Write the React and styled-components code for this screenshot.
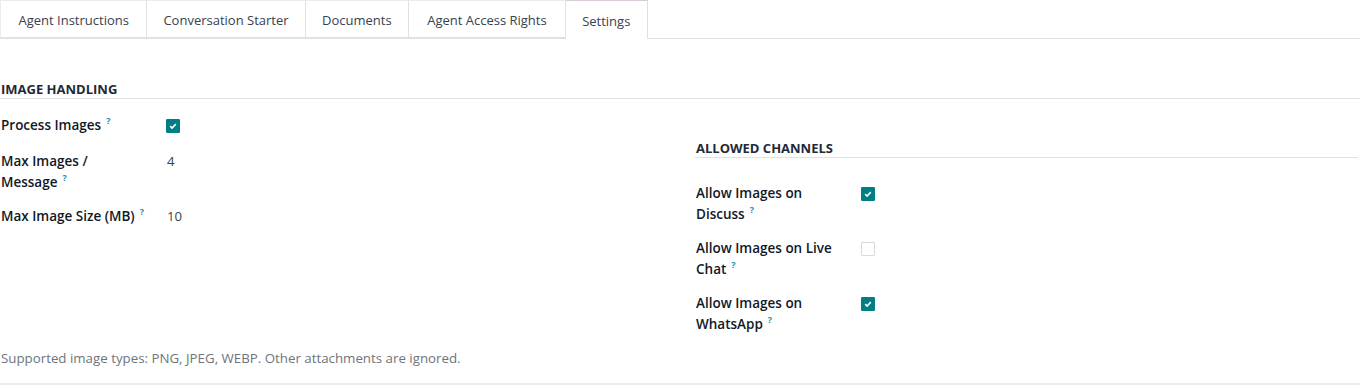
import React from 'react';
import styled, { createGlobalStyle } from 'styled-components';

const teal = '#017e84';
const border = '#dee2e6';

const GlobalStyle = createGlobalStyle`
  body {
    margin: 0;
    background: #fff;
    font-family: "Open Sans", "Noto Sans", sans-serif;
    font-size: 13px;
    color: #212529;
  }
`;

const Page = styled.div`
  width: 1360px;
  height: 385px;
  box-sizing: border-box;
  border-bottom: 2px solid #ececec;
`;

const TabBar = styled.div`
  display: flex;
  height: 38px;
  border-bottom: 1px solid ${border};
  box-sizing: content-box;
`;

const Tab = styled.div`
  display: flex;
  align-items: center;
  padding: 1px ${(p) => p.$pad}px 0;
  margin-bottom: ${(p) => (p.$active ? '-1px' : '0')};
  height: ${(p) => (p.$active ? '39px' : '38px')};
  box-sizing: border-box;
  background: #fff;
  color: #374151;
  border: 1px solid ${border};
  border-top-color: ${(p) => (p.$active ? '#d9c9d9' : '#e9ecef')};
  border-left: none;
  border-bottom: ${(p) => (p.$active ? 'none' : `1px solid ${border}`)};
  &:first-child {
    border-left: 1px solid #e9ecef;
  }
`;

const Content = styled.div`
  padding-top: 41px;
`;

const SectionTitle = styled.div`
  font-weight: 700;
  font-size: 13px;
  text-transform: uppercase;
  color: #1f2937;
  line-height: 18px;
  padding-left: 1px;
  border-bottom: 1px solid ${border};
  margin-bottom: ${(p) => p.$after}px;
`;

const Columns = styled.div`
  display: grid;
  grid-template-columns: 680px 680px;
`;

const Column = styled.div`
  padding-left: ${(p) => p.$indent}px;
  padding-top: ${(p) => p.$top}px;
  padding-right: ${(p) => p.$right || 0}px;
`;

const Row = styled.div`
  display: grid;
  grid-template-columns: 166px 1fr;
  line-height: 21px;
  padding-bottom: ${(p) => p.$pb || 13}px;
`;

const Label = styled.div`
  font-weight: 600;
  font-size: 13.5px;
  color: #111827;
  padding-left: 1px;
  padding-right: 18px;
`;

const LastWord = styled.span`
  white-space: nowrap;
`;

const Help = styled.span`
  display: inline-block;
  vertical-align: top;
  color: #1a8fb0;
  font-size: 9px;
  font-weight: 700;
  line-height: 12px;
  margin-left: 5px;
`;

const Value = styled.div`
  color: #374151;
  font-size: 13.2px;
  padding-left: 1px;
`;

const Check = styled.span`
  display: inline-flex;
  align-items: center;
  justify-content: center;
  width: 14px;
  height: 14px;
  margin-top: 4px;
  box-sizing: border-box;
  border-radius: 1px;
  background: ${(p) => (p.$on ? teal : '#fff')};
  border: 1px solid ${(p) => (p.$on ? teal : '#d8dadd')};
`;

const Note = styled.div`
  color: #6c757d;
  font-size: 13.3px;
  line-height: 21px;
  padding-left: 1px;
`;

function Checkbox({ on }) {
  return (
    <Check $on={on}>
      {on && (
        <svg width="8" height="8" viewBox="0 0 8 8">
          <path d="M1.2 4.2 L3.1 6 L6.8 2.1" fill="none" stroke="#fff" strokeWidth="1.6" />
        </svg>
      )}
    </Check>
  );
}

function Field({ label, children, pb }) {
  const words = label.split(' ');
  const last = words.pop();
  return (
    <Row $pb={pb}>
      <Label>
        {words.length > 0 && words.join(' ') + ' '}
        <LastWord>
          {last}
          <Help>?</Help>
        </LastWord>
      </Label>
      <div>{children}</div>
    </Row>
  );
}

const tabs = [
  ['Agent Instructions', 17.5],
  ['Conversation Starter', 16],
  ['Documents', 16.5],
  ['Agent Access Rights', 18],
  ['Settings', 16.5],
];

export default function App() {
  return (
    <>
      <GlobalStyle />
      <Page>
        <TabBar>
          {tabs.map(([t, pad]) => (
            <Tab key={t} $pad={pad} $active={t === 'Settings'}>
              {t}
            </Tab>
          ))}
        </TabBar>
        <Content>
          <SectionTitle $after={16}>Image Handling</SectionTitle>
          <Columns>
            <Column $indent={0} $top={0}>
              <Field label="Process Images" pb={15}>
                <Checkbox on />
              </Field>
              <Field label="Max Images / Message" pb={13}>
                <Value>4</Value>
              </Field>
              <Field label="Max Image Size (MB)">
                <Value>10</Value>
              </Field>
            </Column>
            <Column $indent={15} $top={24} $right={2}>
              <SectionTitle $after={25}>Allowed Channels</SectionTitle>
              <Field label="Allow Images on Discuss">
                <Checkbox on />
              </Field>
              <Field label="Allow Images on Live Chat">
                <Checkbox />
              </Field>
              <Field label="Allow Images on WhatsApp">
                <Checkbox on />
              </Field>
            </Column>
          </Columns>
          <Note>Supported image types: PNG, JPEG, WEBP. Other attachments are ignored.</Note>
        </Content>
      </Page>
    </>
  );
}
